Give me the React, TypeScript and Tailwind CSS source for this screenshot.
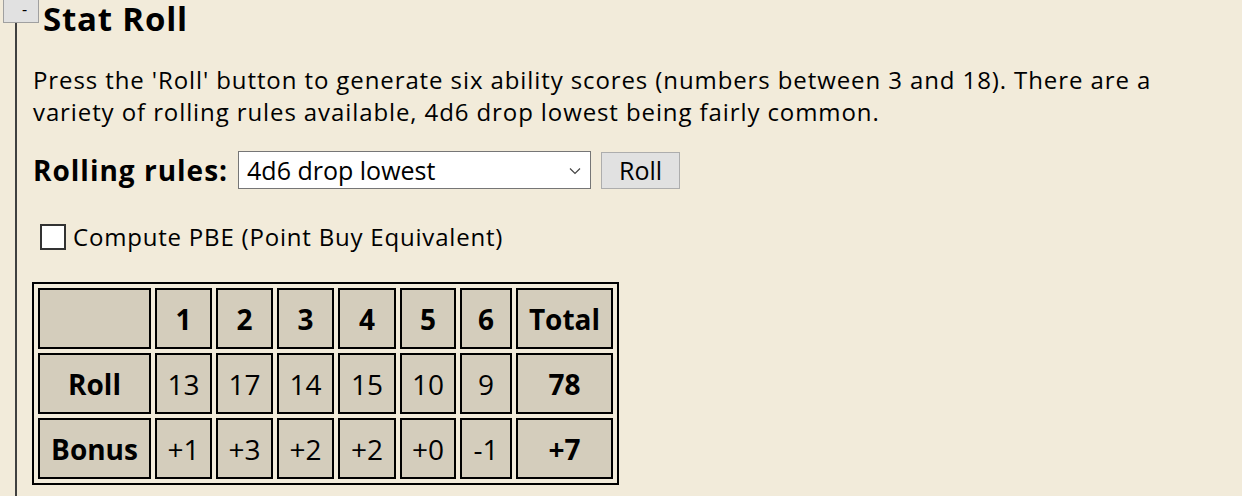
const rolls = [13, 17, 14, 15, 10, 9]
const bonus = ['+1', '+3', '+2', '+2', '+0', '-1']
const widths = ['w-[57px]', 'w-[57px]', 'w-[57px]', 'w-[58px]', 'w-[56px]', 'w-[52px]']

function Cell({ children, w, bold }: { children?: React.ReactNode; w: string; bold?: boolean }) {
  return (
    <td
      className={`${w} h-[61px] border-2 border-black bg-[#d4cdbc] p-0 text-center align-middle text-[28px] leading-none ${
        bold ? 'font-bold' : ''
      }`}
    >
      {children}
    </td>
  )
}

export default function App() {
  return (
    <div className="relative min-h-[496px] w-[1242px] overflow-hidden bg-[#f2ebda] font-['Open_Sans',sans-serif] text-black">
      <button className="absolute left-[3px] top-0 flex h-[23px] w-[36px] items-start justify-center border border-t-0 border-[#a0a0a0] bg-[#e1e1e1] pt-[1px] pl-[7px] text-[16px] leading-none">
        -
      </button>
      <div className="ml-[15px] min-h-[496px] border-l-2 border-[#404040] pl-[16px] pt-[2px]">
        <h2 className="ml-[10px] text-[33px] font-bold leading-[34px] tracking-[0.8px]">Stat Roll</h2>
        <p className="mt-[28px] max-w-[1140px] text-[24px] leading-[32px] tracking-[0.9px]">
          Press the 'Roll' button to generate six ability scores (numbers between 3 and 18). There are a
          variety of rolling rules available, 4d6 drop lowest being fairly common.
        </p>
        <div className="mt-[21px] flex items-center">
          <span className="text-[28px] font-bold tracking-[1px]">Rolling rules:</span>
          <div className="relative ml-[10px] h-[38px] w-[353px] border border-[#767676] bg-white">
            <span className="absolute left-[8px] top-[2px] text-[25px] leading-[32px]">4d6 drop lowest</span>
            <svg className="absolute right-[9px] top-[15px]" width="12" height="8" viewBox="0 0 12 8">
              <path d="M1 1.5 L6 6.5 L11 1.5" fill="none" stroke="#444" strokeWidth="1.2" />
            </svg>
          </div>
          <button className="ml-[10px] h-[37px] w-[79px] border border-[#adadad] bg-[#e1e1e1] text-[25px] leading-none">
            Roll
          </button>
        </div>
        <label className="mt-[28px] ml-[7px] flex items-center">
          <span className="h-[26px] w-[26px] border-2 border-[#333] bg-white" />
          <span className="ml-[7px] text-[24px] tracking-[0.8px]">Compute PBE (Point Buy Equivalent)</span>
        </label>
        <table className="mt-[27px] -ml-[1px] border-separate border-spacing-[4px] border-2 border-black">
          <tbody>
            <tr>
              <Cell w="w-[113px]" />
              {[1, 2, 3, 4, 5, 6].map((n, i) => (
                <Cell key={n} w={widths[i]} bold>
                  {n}
                </Cell>
              ))}
              <Cell w="w-[97px]" bold>
                Total
              </Cell>
            </tr>
            <tr>
              <Cell w="w-[113px]" bold>
                Roll
              </Cell>
              {rolls.map((n, i) => (
                <Cell key={i} w={widths[i]}>
                  {n}
                </Cell>
              ))}
              <Cell w="w-[97px]" bold>
                78
              </Cell>
            </tr>
            <tr>
              <Cell w="w-[113px]" bold>
                Bonus
              </Cell>
              {bonus.map((n, i) => (
                <Cell key={i} w={widths[i]}>
                  {n}
                </Cell>
              ))}
              <Cell w="w-[97px]" bold>
                +7
              </Cell>
            </tr>
          </tbody>
        </table>
      </div>
    </div>
  )
}
